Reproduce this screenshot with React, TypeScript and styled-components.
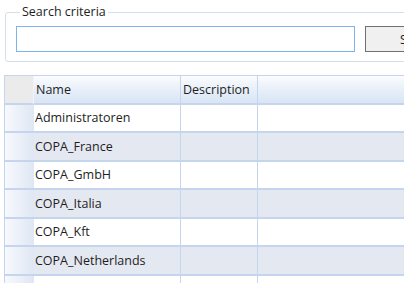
import React from "react";
import styled, { createGlobalStyle } from "styled-components";

const Global = createGlobalStyle`
  html, body { margin: 0; padding: 0; background: #ffffff; overflow: hidden; }
  body { font-family: "Open Sans", "Noto Sans", sans-serif; font-size: 12.5px; color: #1e1e1e; }
`;

const Page = styled.div`
  width: 404px;
  height: 283px;
  overflow: hidden;
  display: flex;
  flex-direction: column;
`;

const GroupBox = styled.fieldset`
  margin: 5px -20px 0 5px;
  padding: 7px 10px 9px 10px;
  border: 1px solid #d5dfe8;
  border-radius: 3px;
  display: flex;
  gap: 10px;
  min-width: 0;
`;

const Legend = styled.legend`
  padding: 0 2px;
  margin-left: 4px;
  font-size: 12.5px;
  line-height: 14px;
  color: #1e1e1e;
`;

const SearchInput = styled.input`
  width: 339px;
  height: 26px;
  box-sizing: border-box;
  border: 1px solid #7eb4ea;
  outline: none;
  padding: 0 4px;
  font: inherit;
  flex: none;
`;

const SearchButton = styled.button`
  width: 75px;
  height: 26px;
  box-sizing: border-box;
  border: 1px solid #707070;
  background: #f0f0f0;
  font: inherit;
  color: #1e1e1e;
  flex: none;
  padding: 0;
  text-align: left;
  text-indent: 34px;
`;

const Grid = styled.div`
  margin: 13px 0 0 4px;
  border-left: 1px solid #c5d5ee;
  border-top: 1px solid #c5d5ee;
  display: grid;
  grid-template-columns: 29px 147px 77px 1fr;
  grid-auto-rows: 28.5px;
`;

const Corner = styled.div`
  background: #ebebeb;
  border-right: 1px solid #f4f4f4;
  border-bottom: 2px solid #c5d5ee;
`;

const HeaderCell = styled.div<{ $last?: boolean }>`
  background: linear-gradient(#fbfcfe, #e6eef9 55%, #d9e5f5);
  border-right: ${(p) => (p.$last ? "none" : "1px solid #c5d5ee")};
  border-bottom: 2px solid #c5d5ee;
  display: flex;
  align-items: center;
  padding-left: 2px;
  white-space: nowrap;
  overflow: hidden;
`;

const RowHeader = styled.div`
  background: linear-gradient(90deg, #f7f9fd, #dfe7f4);
  border-bottom: 2px solid #c5d5ee;
`;

const Cell = styled.div<{ $alt: boolean; $last?: boolean }>`
  background: ${(p) => (p.$alt ? "#e4e8f1" : "#ffffff")};
  border-right: ${(p) => (p.$last ? "none" : "1px solid #c5d5ee")};
  border-bottom: 2px solid #c5d5ee;
  display: flex;
  align-items: center;
  padding-left: 1px;
  white-space: nowrap;
  overflow: hidden;
`;

const rows = [
  "Administratoren",
  "COPA_France",
  "COPA_GmbH",
  "COPA_Italia",
  "COPA_Kft",
  "COPA_Netherlands",
  "",
];

export default function App() {
  return (
    <Page>
      <Global />
      <GroupBox>
        <Legend>Search criteria</Legend>
        <SearchInput />
        <SearchButton>Search</SearchButton>
      </GroupBox>
      <Grid>
        <Corner />
        <HeaderCell>Name</HeaderCell>
        <HeaderCell>Description</HeaderCell>
        <HeaderCell $last />
        {rows.map((r, i) => (
          <React.Fragment key={i}>
            <RowHeader />
            <Cell $alt={i % 2 === 1}>{r}</Cell>
            <Cell $alt={i % 2 === 1} />
            <Cell $alt={i % 2 === 1} $last />
          </React.Fragment>
        ))}
      </Grid>
    </Page>
  );
}
